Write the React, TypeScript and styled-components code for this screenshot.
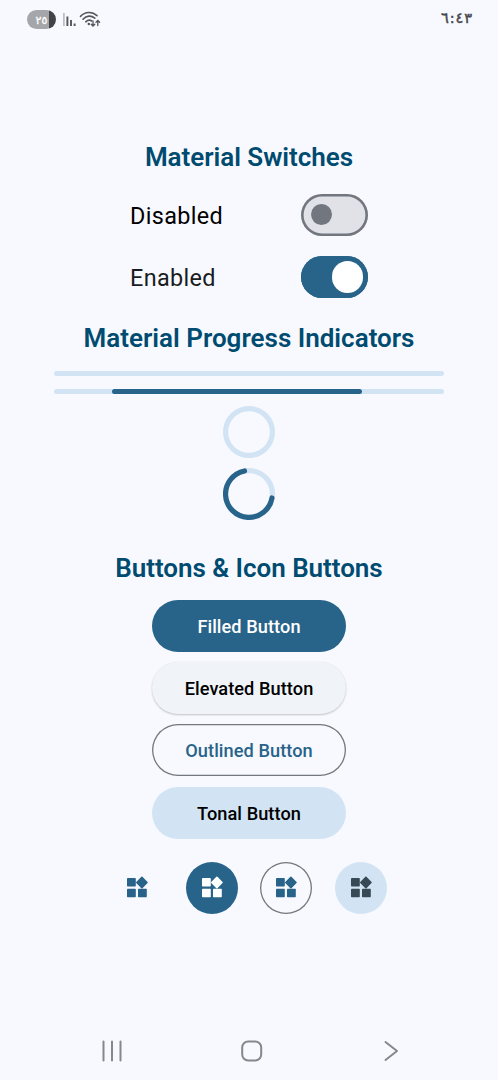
import React from "react";
import styled, { createGlobalStyle, css } from "styled-components";

const GlobalStyle = createGlobalStyle`
  * { box-sizing: border-box; }
  body { margin: 0; background: #f8f9ff; }
`;

const Screen = styled.div`
  width: 498px;
  height: 1080px;
  display: flex;
  flex-direction: column;
  background: #f8f9ff;
  font-family: Roboto, "Liberation Sans", sans-serif;
  overflow: hidden;
`;

const StatusBar = styled.header`
  height: 40px;
  padding: 0 26px 2px 27px;
  display: flex;
  justify-content: space-between;
  align-items: center;
`;

const StatusGroup = styled.div`
  display: flex;
  align-items: center;
  height: 20px;
`;

const Battery = styled.div`
  width: 29px;
  height: 19px;
  border-radius: 9.5px;
  padding-top: 1px;
  background: linear-gradient(90deg, #a5a6a9 0 22px, #414347 22px);
  color: #fff;
  font: 11px/19px "DejaVu Sans", sans-serif;
  -webkit-text-stroke: 0.3px #fff;
  text-align: center;
`;

const Clock = styled.time`
  display: flex;
  gap: 0.9px;
  color: #47494e;
  font: 14.5px/20px "DejaVu Sans", sans-serif;
  -webkit-text-stroke: 0.5px #47494e;
  padding-bottom: 2px;
`;

const Content = styled.main`
  flex: 1;
  padding-top: 100px;
  display: flex;
  flex-direction: column;
  align-items: center;
`;

const Heading = styled.h2<{ $spacing?: number }>`
  margin: 0;
  height: 34px;
  color: #004b70;
  font-size: 26px;
  font-weight: 600;
  line-height: 34px;
  white-space: nowrap;
  letter-spacing: ${(p) => p.$spacing ?? 0}px;
`;

const SwitchList = styled.section`
  width: 238px;
  margin: 20px 0 23px;
  display: flex;
  flex-direction: column;
  gap: 20.6px;
`;

const SwitchRow = styled.label`
  display: flex;
  justify-content: space-between;
  align-items: center;
  height: 41.6px;
`;

const SwitchLabel = styled.span<{ $color: string }>`
  color: ${(p) => p.$color};
  font-size: 23.4px;
  line-height: 30px;
  letter-spacing: 0.36px;
  padding-top: 2px;
`;

const Track = styled.span<{ $on?: boolean }>`
  width: 67.4px;
  height: 41.6px;
  border-radius: 21px;
  display: flex;
  align-items: center;
  box-shadow: inset 0 0 0 2.6px ${(p) => (p.$on ? "#286389" : "#72777f")};
  background: ${(p) => (p.$on ? "#286389" : "#e0e2e8")};
  padding: 0 ${(p) => (p.$on ? 5.2 : 10.4)}px;
  justify-content: ${(p) => (p.$on ? "flex-end" : "flex-start")};
`;

const Thumb = styled.span<{ $on?: boolean }>`
  width: ${(p) => (p.$on ? 31.2 : 20.8)}px;
  height: ${(p) => (p.$on ? 31.2 : 20.8)}px;
  border-radius: 50%;
  background: ${(p) => (p.$on ? "#fff" : "#72777f")};
`;

const ProgressList = styled.section`
  display: flex;
  flex-direction: column;
  align-items: center;
  margin: 16px 0 20.3px;
`;

const Bar = styled.div`
  width: 390px;
  height: 5.2px;
  border-radius: 2.6px;
  background: #d2e4f4;
  margin-bottom: 12.6px;

  & + svg {
    margin-top: -0.8px;
  }
`;

const BarFill = styled.div`
  width: 250px;
  height: 5.2px;
  margin-left: 57.5px;
  border-radius: 2.6px;
  background: #286389;
`;

const Ring = styled.svg`
  display: block;
  width: 52px;
  height: 52px;
  margin-bottom: 10.4px;
`;

const ButtonList = styled.section`
  margin-top: 15px;
  display: flex;
  flex-direction: column;
  gap: 10.4px;
`;

type Variant = "plain" | "filled" | "elevated" | "outlined" | "tonal";

const variants = {
  plain: css`background: transparent; color: #286389;`,
  filled: css`background: #286389; color: #fff;`,
  elevated: css`
    background: #f0f4f9;
    color: #000;
    box-shadow: 0 1px 2px rgba(0, 0, 0, 0.22), 0 0 1px rgba(0, 0, 0, 0.06);
  `,
  outlined: css`background: transparent; color: #286389; box-shadow: inset 0 0 0 1.3px #72777f;`,
  tonal: css`background: #d2e4f4; color: #000;`,
};

const Button = styled.button<{ $variant: Variant }>`
  width: 194.5px;
  height: 52px;
  padding: 2px 0 0;
  border: 0;
  border-radius: 26px;
  font: 500 18.2px/26px Roboto, sans-serif;
  letter-spacing: 0.06px;
  ${(p) => variants[p.$variant]}
`;

const IconRow = styled.section`
  display: flex;
  gap: 22.7px;
  margin-top: 23.4px;
`;

const IconButton = styled.button<{ $variant: Variant }>`
  width: 52px;
  height: 52px;
  padding: 0;
  border: 0;
  border-radius: 50%;
  display: flex;
  align-items: center;
  justify-content: center;
  ${(p) => variants[p.$variant]}
  ${(p) => p.$variant === "tonal" && "color: #374955;"}
`;

const Navigation = styled.nav`
  height: 58px;
  padding: 0 72px 0 77px;
  display: flex;
  justify-content: space-between;
  align-items: center;

  svg {
    width: 70px;
    height: 28px;
    fill: none;
    stroke: #85878c;
    stroke-width: 2;
    stroke-linecap: round;
    stroke-linejoin: round;
  }
`;

const WidgetsIcon = () => (
  <svg width="24" height="24" viewBox="0 0 24 24" fill="currentColor">
    <rect x="2" y="2" width="8.8" height="8.5" rx="0.8" />
    <rect x="2" y="12.7" width="8.8" height="8.5" rx="0.8" />
    <rect x="13" y="12.7" width="8.8" height="8.5" rx="0.8" />
    <rect x="12.5" y="2.1" width="8.8" height="8.8" rx="0.8" transform="rotate(45 16.9 6.5)" />
  </svg>
);

const SignalIcon = () => (
  <svg width="14" height="16" viewBox="0 0 14 16" style={{ marginLeft: 6 }}>
    <path d="M1.9 2V15" stroke="#b2b4b8" strokeWidth="1.5" />
    <path d="M5.4 5.5V15M9 9V15M12.6 12.5V15" stroke="#54565b" strokeWidth="1.9" />
  </svg>
);

const WifiIcon = () => (
  <svg width="24" height="18" viewBox="0 0 24 18" fill="none" stroke="#54565b" strokeWidth="1.6" strokeLinecap="round" style={{ marginLeft: 3 }}>
    <path d="M1.5 6.4C6 1.4 13.2 1.2 18 5.7M4 9.2C7.5 5.3 12.3 5.2 15.8 8.2M6.8 11.8C9 9.7 11 9.7 12.8 11" />
    <circle cx="9.8" cy="14" r="1.2" fill="#54565b" stroke="none" />
    <path d="M14 10.8V16M12.2 14.2L14 16L15.8 14.2M18.8 15.5V10.5M17 12.3L18.8 10.5L20.6 12.3" strokeWidth="1.3" />
  </svg>
);

const buttons: { label: string; variant: Variant }[] = [
  { label: "Filled Button", variant: "filled" },
  { label: "Elevated Button", variant: "elevated" },
  { label: "Outlined Button", variant: "outlined" },
  { label: "Tonal Button", variant: "tonal" },
];

const iconVariants: Variant[] = ["plain", "filled", "outlined", "tonal"];

export default function App() {
  return (
    <>
      <GlobalStyle />
      <Screen>
        <StatusBar>
          <StatusGroup>
            <Battery>٢٥</Battery>
            <SignalIcon />
            <WifiIcon />
          </StatusGroup>
          <Clock>
            {[..."٦:٤٣"].map((glyph, i) => (
              <span key={i}>{glyph}</span>
            ))}
          </Clock>
        </StatusBar>
        <Content>
          <Heading $spacing={-0.03}>Material Switches</Heading>
          <SwitchList>
            <SwitchRow>
              <SwitchLabel $color="#000">Disabled</SwitchLabel>
              <Track><Thumb /></Track>
            </SwitchRow>
            <SwitchRow>
              <SwitchLabel $color="#181c20">Enabled</SwitchLabel>
              <Track $on><Thumb $on /></Track>
            </SwitchRow>
          </SwitchList>
          <Heading>Material Progress Indicators</Heading>
          <ProgressList>
            <Bar />
            <Bar><BarFill /></Bar>
            <Ring viewBox="0 0 52 52">
              <circle cx="26" cy="26" r="23.4" fill="none" stroke="#d2e4f4" strokeWidth="5.2" />
            </Ring>
            <Ring viewBox="0 0 52 52">
              <circle cx="26" cy="26" r="23.4" fill="none" stroke="#d2e4f4" strokeWidth="5.2" />
              <path d="M49 30A23.4 23.4 0 1 1 21.5 3" fill="none" stroke="#286389" strokeWidth="5.2" strokeLinecap="round" />
            </Ring>
          </ProgressList>
          <Heading $spacing={-0.03}>Buttons &amp; Icon Buttons</Heading>
          <ButtonList>
            {buttons.map((b) => (
              <Button key={b.label} $variant={b.variant}>{b.label}</Button>
            ))}
          </ButtonList>
          <IconRow>
            {iconVariants.map((v) => (
              <IconButton key={v} $variant={v}><WidgetsIcon /></IconButton>
            ))}
          </IconRow>
        </Content>
        <Navigation>
          <svg viewBox="0 0 70 28"><path d="M26.5 4.5V23.5M35 4.5V23.5M43.5 4.5V23.5" /></svg>
          <svg viewBox="0 0 70 28"><rect x="25.2" y="4.5" width="19" height="19" rx="6" /></svg>
          <svg viewBox="0 0 70 28"><path d="M29.5 5L41 14L29.5 23" /></svg>
        </Navigation>
      </Screen>
    </>
  );
}
